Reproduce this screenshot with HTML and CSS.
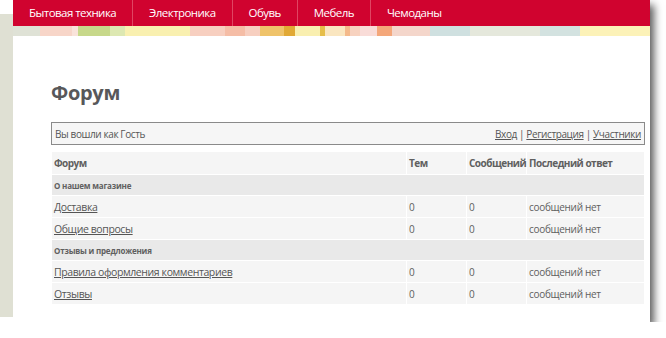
FILE: index.html
```html
<!DOCTYPE html>
<html lang="ru">
<head>
    <meta charset="UTF-8">
    <title>Форум</title>
    <link rel="stylesheet" href="styles.css">
</head>
<body>

<div class="frame">
    <div class="side"></div>
    <div class="page">
        <ul class="nav">
            <li><a href="#">Бытовая техника</a></li>
            <li><a href="#">Электроника</a></li>
            <li><a href="#">Обувь</a></li>
            <li><a href="#">Мебель</a></li>
            <li><a href="#">Чемоданы</a></li>
        </ul>
        <div class="stripe"></div>

        <div class="content">
            <h1>Форум</h1>

            <div class="login-bar">
                <span>Вы вошли как Гость</span>
                <span class="links"><a href="#">Вход</a> | <a href="#">Регистрация</a> | <a href="#">Участники</a></span>
            </div>

            <table class="forum">
                <thead>
                    <tr>
                        <th class="col-name">Форум</th>
                        <th class="col-num">Тем</th>
                        <th class="col-num">Сообщений</th>
                        <th class="col-last">Последний ответ</th>
                    </tr>
                </thead>
                <tbody>
                    <tr class="cat"><td colspan="4">О нашем магазине</td></tr>
                    <tr>
                        <td><a href="#">Доставка</a></td>
                        <td>0</td>
                        <td>0</td>
                        <td>сообщений нет</td>
                    </tr>
                    <tr>
                        <td><a href="#">Общие вопросы</a></td>
                        <td>0</td>
                        <td>0</td>
                        <td>сообщений нет</td>
                    </tr>
                    <tr class="cat"><td colspan="4">Отзывы и предложения</td></tr>
                    <tr>
                        <td><a href="#">Правила оформления комментариев</a></td>
                        <td>0</td>
                        <td>0</td>
                        <td>сообщений нет</td>
                    </tr>
                    <tr>
                        <td><a href="#">Отзывы</a></td>
                        <td>0</td>
                        <td>0</td>
                        <td>сообщений нет</td>
                    </tr>
                </tbody>
            </table>
        </div>
    </div>
</div>

</body>
</html>
```

FILE: styles.css
```css
body {
    margin: 0;
    background-color: #fff;
    font-family: "Open Sans", Arial, sans-serif;
    color: #555;
}
.frame {
    width: 650px;
    height: 322px;
    display: flex;
    background-color: #fff;
    box-shadow: 4px 5px 8px rgba(0, 0, 0, 0.65);
}
.side {
    width: 13px;
    height: 303px;
    margin-top: 14px;
    background-color: #dfe0d3;
}
.page {
    flex: 1;
    display: flex;
    flex-direction: column;
}
.nav {
    display: flex;
    height: 26px;
    margin: 0;
    padding: 0;
    list-style: none;
    background-color: #d0032f;
}
.nav li {
    border-right: 1px solid #e04562;
}
.nav li:last-child {
    border-right: none;
}
.nav a {
    display: block;
    padding: 0 16px;
    line-height: 26px;
    font-size: 11.5px;
    letter-spacing: -0.55px;
    color: #fff;
    text-decoration: none;
}
.stripe {
    height: 10px;
    background: linear-gradient(to right,
        #dfe2d6 0 27px, #f7d5c8 27px 59px, #f9e3da 59px 65px,
        #c7d88a 65px 97px, #dde8b2 97px 112px, #f9f0b0 112px 177px,
        #f7cfc0 177px 212px, #f5bda6 212px 232px, #f7cfc0 232px 247px,
        #efc36a 247px 271px, #e1a935 271px 282px, #f9efb0 282px 307px,
        #e6be4a 307px 312px, #fae6c0 312px 332px, #f4b98a 332px 337px,
        #f7d2bf 337px 347px, #f9dcd8 347px 364px, #f4a77a 364px 379px,
        #f4d6cb 379px 417px, #cfe0e0 417px 457px, #e5e8dc 457px 527px,
        #d3e2e0 527px 567px, #fcf2b8 567px);
}
.content {
    padding: 0 5px 0 38px;
}
h1 {
    margin: 43px 0 16px;
    font-size: 20px;
    font-weight: bold;
    letter-spacing: -0.3px;
    color: #58585a;
}
.login-bar {
    display: flex;
    justify-content: space-between;
    align-items: center;
    height: 21px;
    padding: 0 3px;
    border: 1px solid #8a8a8a;
    background-color: #f6f6f6;
    font-size: 10px;
    letter-spacing: -0.4px;
}
.login-bar a {
    color: #555;
}
.forum {
    width: 594px;
    margin-top: 6px;
    border-collapse: collapse;
    table-layout: fixed;
    font-size: 10px;
    letter-spacing: -0.3px;
    color: #606060;
}
.forum th,
.forum td {
    height: 21px;
    padding: 0 2px;
    border: 1px solid #fff;
    background-color: #f5f5f5;
    text-align: left;
    white-space: nowrap;
}
.forum th {
    height: 22px;
    font-size: 10px;
    font-weight: bold;
    letter-spacing: -0.5px;
}
.col-name {
    width: 350px;
}
.col-num {
    width: 55px;
}
.forum tr.cat td {
    height: 20px;
    background-color: #e9e9e9;
    font-size: 8px;
    font-weight: bold;
    letter-spacing: -0.2px;
}
.forum td a {
    font-size: 10.5px;
    letter-spacing: -0.4px;
    color: #555;
}
```
